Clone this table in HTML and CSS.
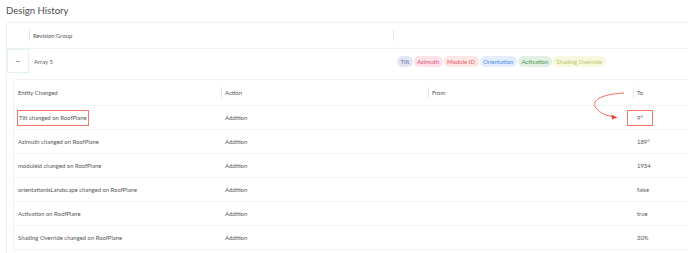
FILE: index.html
```html
<!DOCTYPE html>
<html lang="en">
<head>
    <meta charset="UTF-8">
    <title>Design History</title>
    <link rel="stylesheet" href="styles.css">
</head>
<body>
    <div class="page">
        <h1 class="title">Design History</h1>

        <div class="card">
            <div class="group-head">
                <div class="expand-col"></div>
                <div class="group-col"><span class="col-label">Revision Group</span></div>
                <div class="group-col"><span class="col-label"></span></div>
            </div>

            <div class="group-row">
                <div class="expand-btn">&mdash;</div>
                <div class="group-name">Array 5</div>
                <div class="tags">
                    <span class="tag tag-tilt">Tilt</span>
                    <span class="tag tag-azimuth">Azimuth</span>
                    <span class="tag tag-module">Module ID</span>
                    <span class="tag tag-orientation">Orientation</span>
                    <span class="tag tag-activation">Activation</span>
                    <span class="tag tag-shading">Shading Override</span>
                </div>
            </div>

            <div class="detail">
                <table class="changes">
                    <colgroup>
                        <col style="width: 207px">
                        <col style="width: 207px">
                        <col style="width: 205px">
                        <col style="width: 90px">
                    </colgroup>
                    <thead>
                        <tr>
                            <th>Entity Changed</th>
                            <th><span class="col-label">Action</span></th>
                            <th><span class="col-label">From</span></th>
                            <th><span class="col-label">To</span></th>
                        </tr>
                    </thead>
                    <tbody>
                        <tr>
                            <td><span class="mark">Tilt changed on RoofPlane</span></td>
                            <td>Addition</td>
                            <td></td>
                            <td><span class="mark-value">9°</span></td>
                        </tr>
                        <tr>
                            <td>Azimuth changed on RoofPlane</td>
                            <td>Addition</td>
                            <td></td>
                            <td>189°</td>
                        </tr>
                        <tr>
                            <td>moduleId changed on RoofPlane</td>
                            <td>Addition</td>
                            <td></td>
                            <td>1934</td>
                        </tr>
                        <tr>
                            <td>orientationIsLandscape changed on RoofPlane</td>
                            <td>Addition</td>
                            <td></td>
                            <td>false</td>
                        </tr>
                        <tr>
                            <td>Activation on RoofPlane</td>
                            <td>Addition</td>
                            <td></td>
                            <td>true</td>
                        </tr>
                        <tr>
                            <td>Shading Override changed on RoofPlane</td>
                            <td>Addition</td>
                            <td></td>
                            <td>20%</td>
                        </tr>
                    </tbody>
                </table>
            </div>
        </div>

        <!-- annotation arrow from the To header down to the changed value -->
        <svg class="arrow" width="688" height="253" viewBox="0 0 688 253">
            <path d="M624 93 C 605 94, 590 99, 596 108 C 600 113, 606 116, 613 116.5" fill="none" stroke="#f0685e" stroke-width="1"/>
            <path d="M617.5 117.5 L 611.5 114.5 L 612 119.5 Z" fill="#e8473d"/>
        </svg>
    </div>
</body>
</html>
```

FILE: styles.css
```css
body {
    margin: 0;
    padding: 0;
    font-family: Lato, "Open Sans", sans-serif;
    background-color: #fff;
    color: #555;
    overflow: hidden;
}

.page {
    position: relative;
    width: 688px;
    height: 253px;
    padding-left: 6px;
    box-sizing: border-box;
    overflow: hidden;
}

.title {
    margin: 0;
    padding-top: 4px;
    height: 18px;
    font-size: 9.6px;
    font-weight: 400;
    line-height: 13px;
    color: #4d4d4d;
}

/* Outer card, runs off the right edge */
.card {
    width: 720px;
    border: 1px solid #f1f1f1;
    border-radius: 3px;
    padding-bottom: 10px;
}

.col-label {
    display: block;
    border-left: 1px solid #e6e6e6;
    padding-left: 3px;
    height: 11px;
    line-height: 11px;
}

.group-head,
.group-row {
    display: grid;
    grid-template-columns: 22px 364px 1fr;
    align-items: center;
    font-size: 5.9px;
}

.group-head {
    height: 25px;
}

.group-row {
    height: 25px;
    box-sizing: border-box;
    border-top: 1px solid #f1f1f1;
}

.expand-btn {
    height: 100%;
    box-sizing: border-box;
    border: 1px solid #e0f3f3;
    display: flex;
    align-items: center;
    justify-content: center;
    font-size: 7px;
    color: #666;
}

.group-name {
    padding-left: 5px;
}

.tags {
    display: flex;
    gap: 1px;
    padding-left: 4px;
}

.tag {
    border-radius: 6px;
    padding: 0 3.5px;
    height: 11px;
    line-height: 11px;
    font-size: 6px;
}

.tag-tilt { background-color: #e4e5f4; color: #6669a8; }
.tag-azimuth { background-color: #fde2ea; color: #d4507a; }
.tag-module { background-color: #fde6e6; color: #e4545a; }
.tag-orientation { background-color: #e2eefc; color: #4d8be0; }
.tag-activation { background-color: #e3f1e4; color: #4c9652; }
.tag-shading { background-color: #f7f9df; color: #c2c46a; }

/* Nested change table */
.detail {
    padding: 6px 0 0 6px;
}

.changes {
    table-layout: fixed;
    border-collapse: separate;
    border-spacing: 0;
    border: 1px solid #f1f1f1;
    border-right: none;
    border-bottom: none;
    border-radius: 3px 0 0 0;
    font-size: 5.9px;
}

.changes th,
.changes td {
    height: 23px;
    padding: 0 0 0 4px;
    border-bottom: 1px solid #f3f3f3;
    text-align: left;
    font-weight: 400;
    white-space: nowrap;
}

.changes th {
    height: 25px;
}

.changes th .col-label {
    margin-left: -4px;
}

.mark {
    display: inline-block;
    padding: 3.5px 1px;
    margin: -3.5px -1px;
    border: 1.5px solid #f2786d;
}

.mark-value {
    display: inline-block;
    padding: 3.5px 9px;
    margin: -3.5px 0 -3.5px -10px;
    border: 1.5px solid #f2786d;
}

.arrow {
    position: absolute;
    left: 0;
    top: 0;
    pointer-events: none;
}
```
